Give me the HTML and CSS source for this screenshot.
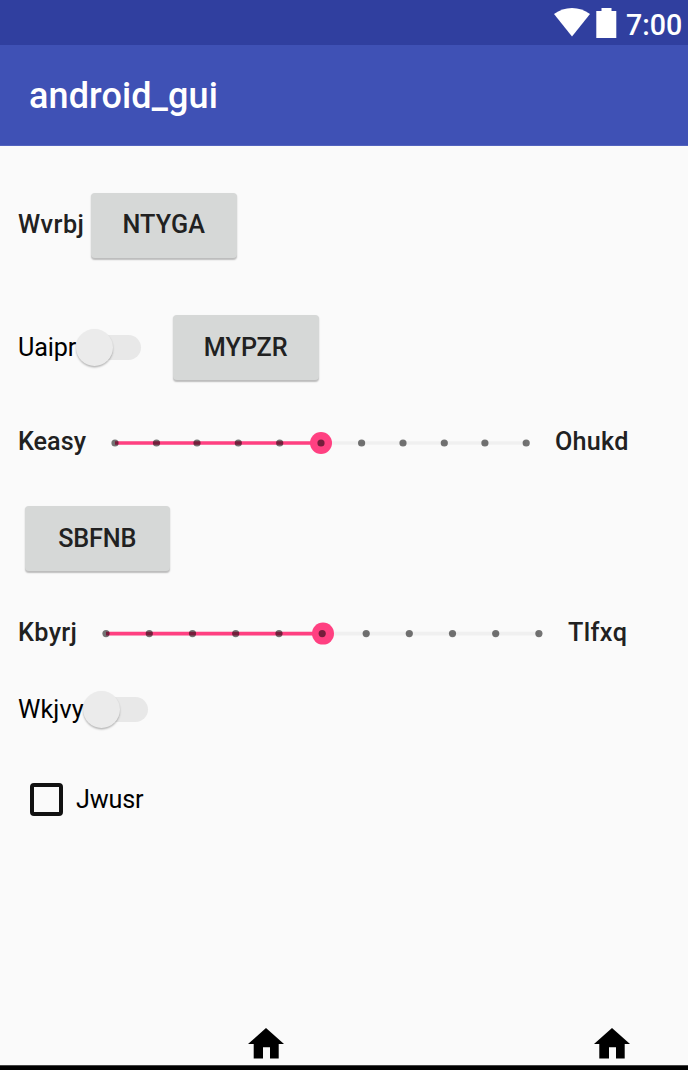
FILE: index.html
```html
<!DOCTYPE html>
<html lang="en">
<head>
<meta charset="utf-8">
<title>android_gui</title>
<link rel="stylesheet" href="styles.css">
</head>
<body>
<div class="screen">
  <header class="status">
    <svg class="wifi" width="36" height="29" viewBox="0 0 36 29"><path d="M0 6Q8 0 18 0T36 6L18 28.5Z" fill="#fff"/></svg>
    <svg class="battery" width="21" height="30" viewBox="0 0 21 30"><path d="M5.5 0H15.5V3H20.3V30H.3V3H5.5Z" fill="#fff"/></svg>
    <span class="clock">7:00</span>
  </header>
  <div class="appbar"><h1 class="title">android_gui</h1></div>
  <main class="content">
    <div class="row row-a"><span class="label w-a">Wvrbj</span><button class="btn btn-a">NTYGA</button></div>
    <div class="row row-b"><span class="label plain w-b">Uaipr</span><span class="switch"><span class="thumb"></span><span class="track"></span></span><button class="btn btn-b">MYPZR</button></div>
    <div class="row row-c"><span class="label w-c">Keasy</span>
      <svg class="slider slider-c" width="440" height="24" viewBox="0 0 440 24">
        <path d="M15 12H426" stroke="#f0f0f0" stroke-width="3.6"/><path d="M15 12H221" stroke="#ff4081" stroke-width="3.6"/><circle cx="221" cy="12" r="11" fill="#ff4081"/>
        <g fill="#000" fill-opacity=".54"><circle cx="15" cy="12" r="3.6"/><circle cx="56.5" cy="12" r="3.6"/><circle cx="97" cy="12" r="3.6"/><circle cx="138.3" cy="12" r="3.6"/><circle cx="179.7" cy="12" r="3.6"/><circle cx="221" cy="12" r="3.6"/><circle cx="261.6" cy="12" r="3.6"/><circle cx="303" cy="12" r="3.6"/><circle cx="344.3" cy="12" r="3.6"/><circle cx="384.9" cy="12" r="3.6"/><circle cx="426.2" cy="12" r="3.6"/></g>
      </svg><span class="label end-c">Ohukd</span></div>
    <div class="row row-d"><button class="btn btn-d">SBFNB</button></div>
    <div class="row row-e"><span class="label w-e">Kbyrj</span>
      <svg class="slider" width="460" height="24" viewBox="0 0 460 24">
        <path d="M15 11.6H448" stroke="#f0f0f0" stroke-width="3.6"/><path d="M15 11.6H232" stroke="#ff4081" stroke-width="3.6"/><circle cx="232" cy="11.6" r="11" fill="#ff4081"/>
        <g fill="#000" fill-opacity=".54"><circle cx="15" cy="11.6" r="3.6"/><circle cx="58.3" cy="11.6" r="3.6"/><circle cx="101.5" cy="11.6" r="3.6"/><circle cx="144.7" cy="11.6" r="3.6"/><circle cx="188" cy="11.6" r="3.6"/><circle cx="231.2" cy="11.6" r="3.6"/><circle cx="275.2" cy="11.6" r="3.6"/><circle cx="318.3" cy="11.6" r="3.6"/><circle cx="361.5" cy="11.6" r="3.6"/><circle cx="404.7" cy="11.6" r="3.6"/><circle cx="447.9" cy="11.6" r="3.6"/></g>
      </svg><span class="label end-e">Tlfxq</span></div>
    <div class="row row-f"><span class="label plain w-f">Wkjvy</span><span class="switch switch-f"><span class="thumb"></span><span class="track"></span></span></div>
    <div class="row row-g"><span class="checkbox"></span><span class="label plain w-g">Jwusr</span></div>
  </main>
  <nav class="nav">
    <svg width="36" height="31" viewBox="0 0 36 31"><path d="M18 0L36 16H30.7V30.5H22V19.3H15V30.5H5.7V16H0Z"/></svg>
    <svg width="36" height="31" viewBox="0 0 36 31"><path d="M18 0L36 16H30.7V30.5H22V19.3H15V30.5H5.3V16H0Z"/></svg>
  </nav>
  <div class="edge"></div>
</div>
</body>
</html>
```
FILE: styles.css
```css
* { box-sizing: border-box; }
body { margin: 0; font-family: Roboto, sans-serif; }
.screen { width: 688px; height: 1070px; display: flex; flex-direction: column; background: #fafafa; overflow: hidden; }
.status { height: 45px; flex: none; display: flex; align-items: flex-start; padding: 8px 6px 0 0; justify-content: flex-end; background: #303f9f; color: #fff; }
.battery { margin-left: 6px; }
.clock { width: 56px; margin-left: 9px; font-size: 28.6px; font-weight: 500; line-height: 34px; white-space: nowrap; }
.appbar { height: 101px; flex: none; display: flex; align-items: center; padding-left: 29px; border-bottom: 1px solid #5263be; background: #3f51b5; color: #fff; }
.title { margin: 1px 0 0; font-size: 36px; font-weight: 500; line-height: 42px; letter-spacing: .12px; }
.content { flex: 1; }
.row { display: flex; align-items: center; padding-left: 18px; }
.row-a { height: 158px; }
.row-b { height: 86px; }
.row-c { height: 103px; }
.row-d { height: 91px; padding-left: 24.5px; }
.row-e { height: 98px; }
.row-f { height: 56px; }
.row-g { height: 122px; padding-left: 30px; }
.label { flex: none; font-size: 25.2px; font-weight: 500; line-height: 30px; color: #212121; white-space: nowrap; }
.plain { font-weight: 400; color: #000; }
.w-a { width: 73px; letter-spacing: .45px; }
.w-b { width: 58px; margin-top: 2px; letter-spacing: -.15px; }
.w-c { width: 82px; }
.w-e { width: 73px; letter-spacing: .35px; }
.w-f { width: 65px; letter-spacing: .1px; }
.w-g { margin-top: 1px; letter-spacing: -.15px; }
.slider { flex: none; display: block; margin-top: 1px; }
.slider-c { margin-top: 3px; }
.end-c { margin-left: 15px; letter-spacing: .25px; }
.end-e { margin-left: 17px; letter-spacing: .4px; }
.btn { flex: none; width: 145.5px; height: 65px; padding: 0; border: 0; border-radius: 4px; background: #d6d8d7; color: #212121; font: 500 25.2px/30px Roboto, sans-serif; box-shadow: 0 1.5px 1.5px rgba(0, 0, 0, .25); }
.btn-a { letter-spacing: .15px; }
.btn-b { margin-left: 32px; padding-top: 1px; }
.btn-d { letter-spacing: -.15px; }
.switch { width: 65px; height: 37px; flex: none; display: flex; align-items: center; }
.switch-f { margin-bottom: 1px; }
.thumb { position: relative; width: 37px; height: 37px; flex: none; border-radius: 50%; background: #ebebeb; box-shadow: 0 1.5px 2px rgba(0, 0, 0, .27); }
.track { flex: none; width: 46px; height: 25px; margin-left: -18px; border-radius: 13px; background: #e8e8e8; }
.checkbox { width: 33px; height: 33px; margin-right: 13px; border: 4px solid #111; border-radius: 4px; }
.nav { height: 37px; flex: none; display: flex; align-items: flex-start; gap: 310px; padding-left: 248px; }
.edge { height: 5px; flex: none; border-top: 1px solid #444; background: #000; }
```
